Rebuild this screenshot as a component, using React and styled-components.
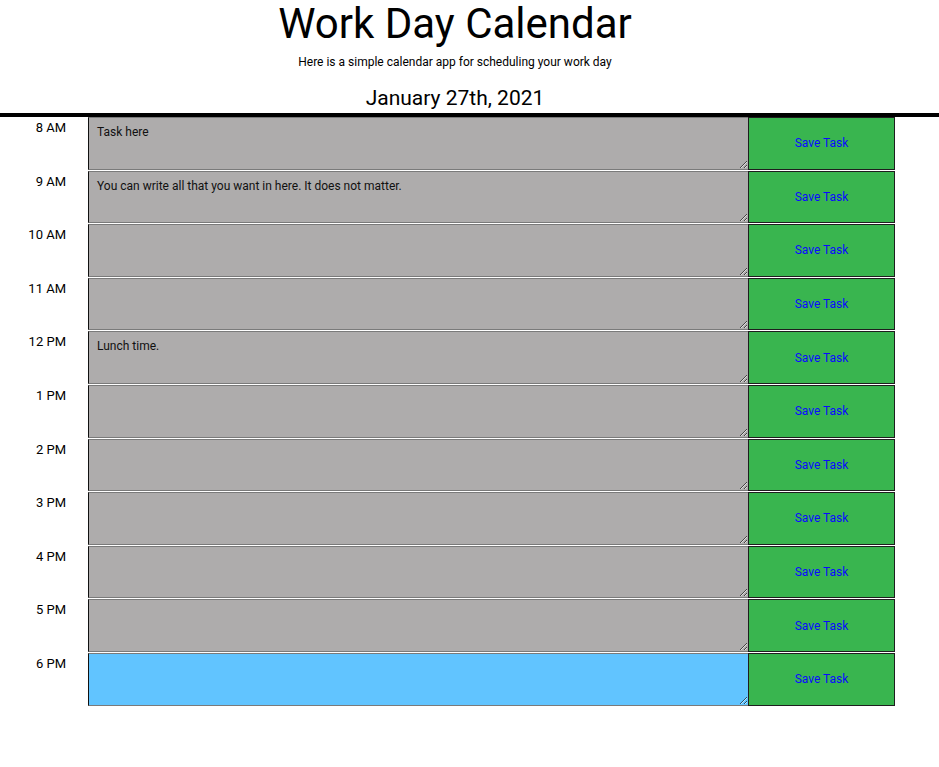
import React, { useState } from "react";
import styled, { createGlobalStyle } from "styled-components";

const GlobalStyle = createGlobalStyle`
  body {
    margin: 0;
    background: #ffffff;
    font-family: Roboto, "Liberation Sans", sans-serif;
    color: #000;
  }
`;

const hours = [
  { label: "8 AM", text: "Task here" },
  { label: "9 AM", text: "You can write all that you want in here. It does not matter." },
  { label: "10 AM", text: "" },
  { label: "11 AM", text: "" },
  { label: "12 PM", text: "Lunch time." },
  { label: "1 PM", text: "" },
  { label: "2 PM", text: "" },
  { label: "3 PM", text: "" },
  { label: "4 PM", text: "" },
  { label: "5 PM", text: "" },
  { label: "6 PM", text: "", present: true },
];

const App = () => {
  const [tasks, setTasks] = useState(hours.map((h) => h.text));

  const handleChange = (i, value) => {
    const next = [...tasks];
    next[i] = value;
    setTasks(next);
  };

  return (
    <>
      <GlobalStyle />
      <Header>
        <Title>Work Day Calendar</Title>
        <Lead>Here is a simple calendar app for scheduling your work day</Lead>
        <CurrentDay>January 27th, 2021</CurrentDay>
      </Header>
      <Divider />
      <Planner>
        {hours.map((h, i) => (
          <Row key={h.label}>
            <Hour>{h.label}</Hour>
            <TaskArea
              present={h.present ? 1 : 0}
              value={tasks[i]}
              onChange={(e) => handleChange(i, e.target.value)}
            />
            <SaveBtn>Save Task</SaveBtn>
          </Row>
        ))}
      </Planner>
    </>
  );
};

export default App;

const Header = styled.header`
  display: flex;
  flex-direction: column;
  align-items: center;
  padding-right: 29px;
`;

const Title = styled.h1`
  margin: 0;
  font-size: 42px;
  font-weight: 400;
  line-height: 48px;
`;

const Lead = styled.p`
  margin: 6px 0 0;
  font-size: 12px;
  line-height: 16px;
`;

const CurrentDay = styled.p`
  margin: 15px 0 0;
  font-size: 21px;
  line-height: 26px;
`;

const Divider = styled.hr`
  margin: 2px 0 0;
  border: none;
  border-top: 4px solid #000;
  height: 0;
`;

const Planner = styled.main`
  display: flex;
  flex-direction: column;
  padding: 0 44px 0 0;
`;

const Row = styled.div`
  box-sizing: border-box;
  display: grid;
  grid-template-columns: 88px 660px 147px;
  height: 53.6px;
  padding-bottom: 1px;
`;

const Hour = styled.div`
  text-align: right;
  padding: 3px 22px 0 0;
  font-size: 13px;
  line-height: 16px;
`;

const TaskArea = styled.textarea`
  box-sizing: border-box;
  margin: 0;
  height: 100%;
  width: 100%;
  padding: 7px 8px;
  border: 1px solid #7a7a7a;
  border-left-color: #111;
  border-right: none;
  background: ${({ present }) => (present ? "#61c4ff" : "#aeacac")};
  font-family: Roboto, "Liberation Sans", sans-serif;
  font-size: 12px;
  line-height: 15px;
  color: #111;
  outline: none;
`;

const SaveBtn = styled.button`
  box-sizing: border-box;
  margin: 0;
  height: 100%;
  border: 1px solid #1e1e1e;
  background: #39b54f;
  color: #0a0aff;
  font-family: Roboto, "Liberation Sans", sans-serif;
  font-size: 12px;
  cursor: pointer;
`;
